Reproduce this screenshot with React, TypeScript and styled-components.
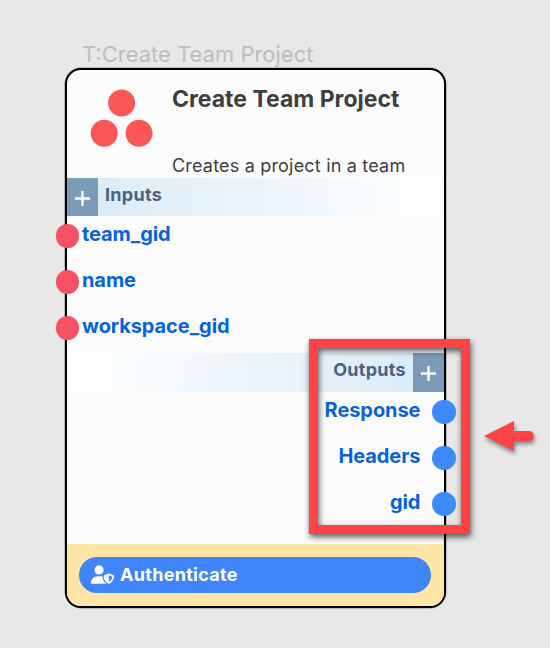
import React from "react";
import styled, { createGlobalStyle } from "styled-components";
import { FaUserShield } from "react-icons/fa6";

const GlobalStyle = createGlobalStyle`
  * { box-sizing: border-box; }
  body { margin: 0; background: #e8e8e8; font-family: Inter, sans-serif; }
`;

const Canvas = styled.main`
  position: relative;
  width: 550px;
  height: 648px;
  padding: 40px 0 0 65px;
  overflow: hidden;
  background: #e8e8e8;
`;

const NodeLabel = styled.div`
  height: 28px;
  padding-left: 17px;
  font-size: 22px;
  line-height: 29px;
  letter-spacing: 0;
  white-space: nowrap;
  color: #bdbdbd;
`;

const Card = styled.section`
  display: flex;
  flex-direction: column;
  width: 381px;
  height: 540px;
  border: 2px solid #000;
  border-radius: 16px;
  background: #fcfcfc;
  box-shadow: 0 0 0 0.5px rgba(0, 0, 0, 0.4);
`;

const Header = styled.header`
  display: flex;
  height: 108px;
  padding: 18px 0 0 23px;
`;

const Logo = styled.svg`
  flex: none;
  width: 64px;
  height: 60px;
  fill: #fc5656;
`;

const Heading = styled.div`
  display: flex;
  flex-direction: column;
  justify-content: space-between;
  margin: -3px 0 0 18px;
  white-space: nowrap;
  color: #3e3e40;
`;

const Title = styled.h1`
  margin: 0;
  font-size: 23px;
  line-height: 28px;
  font-weight: 700;
`;

const Description = styled.p`
  margin: 0;
  font-size: 18px;
  line-height: 24px;
  letter-spacing: 0.19px;
`;

const SectionBar = styled.div<{ $side: "left" | "right" }>`
  display: flex;
  flex-direction: ${(p) => (p.$side === "left" ? "row" : "row-reverse")};
  height: ${(p) => (p.$side === "left" ? 38 : 39)}px;
  background: linear-gradient(to ${(p) => (p.$side === "left" ? "right" : "left")}, #d8eaf7, #fff);
`;

const AddButton = styled.button`
  display: flex;
  justify-content: center;
  width: 31px;
  height: 100%;
  padding: 13px 0 0;
  border: 0;
  background: #7a9cb8;
`;

const SectionName = styled.span`
  padding: 5px 7px 0;
  font-size: 18px;
  line-height: 24px;
  font-weight: 700;
  letter-spacing: 0.3px;
  color: #4c627f;
`;

const PortList = styled.ul<{ $side: "left" | "right" }>`
  display: flex;
  flex-direction: column;
  gap: 8px;
  height: ${(p) => (p.$side === "left" ? 137 : 152)}px;
  margin: 0;
  padding: 0;
  list-style: none;
`;

const PortRow = styled.li<{ $side: "left" | "right" }>`
  position: relative;
  height: 38px;
  padding: ${(p) => (p.$side === "left" ? "0 0 0 15px" : "0 23.6px 0 0")};
  text-align: ${(p) => p.$side};
  font-size: 20px;
  line-height: 37px;
  font-weight: 700;
  letter-spacing: -0.08px;
  color: #0663d9;
`;

const PortDot = styled.i<{ $side: "left" | "right" }>`
  position: absolute;
  top: 8px;
  ${(p) => (p.$side === "left" ? "left: -11.2px" : "right: -11.5px")};
  width: 23.5px;
  height: 23.5px;
  border-radius: 50%;
  background: ${(p) => (p.$side === "left" ? "#f55164" : "#3d8bfb")};
`;

const Footer = styled.footer`
  flex: 1;
  padding: 12.5px 13px 0 12px;
  border-radius: 0 0 14px 14px;
  background: #ffe6a6;
`;

const AuthButton = styled.button`
  display: flex;
  align-items: center;
  gap: 6px;
  width: 100%;
  height: 36.5px;
  padding: 0 12px;
  border: 0;
  border-radius: 19px;
  background: #3f84f9;
  color: #fff;
  font: 700 18px/24px Inter, sans-serif;
  letter-spacing: 0.3px;
`;

const HighlightBox = styled.div`
  position: absolute;
  left: 309px;
  top: 339px;
  width: 161px;
  height: 195px;
  border: 9px solid #fd4344;
  filter: drop-shadow(1px 3px 3px rgba(0, 0, 0, 0.65));
`;

const Arrow = styled.svg`
  position: absolute;
  left: 480px;
  top: 416px;
  width: 60px;
  height: 44px;
  fill: #fd4344;
  filter: drop-shadow(1px 3px 2px rgba(0, 0, 0, 0.45));
`;

const Plus = () => (
  <svg width="15" height="15" viewBox="0 0 15 15" stroke="#fff" strokeWidth="2.4">
    <path d="M7.5 0V15M0 7.5H15" />
  </svg>
);

type Side = "left" | "right";

const Ports = ({ side, names }: { side: Side; names: string[] }) => (
  <PortList $side={side}>
    {names.map((name) => (
      <PortRow key={name} $side={side}>
        {name}
        <PortDot $side={side} />
      </PortRow>
    ))}
  </PortList>
);

const Section = ({ side, title }: { side: Side; title: string }) => (
  <SectionBar $side={side}>
    <AddButton aria-label={`Add to ${title}`}>
      <Plus />
    </AddButton>
    <SectionName>{title}</SectionName>
  </SectionBar>
);

export default function App() {
  return (
    <>
      <GlobalStyle />
      <Canvas>
        <NodeLabel>T:Create Team Project</NodeLabel>
        <Card>
          <Header>
            <Logo viewBox="0 0 64 60">
              <circle cx="31.6" cy="15" r="13.5" />
              <circle cx="14.2" cy="45.2" r="13.5" />
              <circle cx="49" cy="45.2" r="13.5" />
            </Logo>
            <Heading>
              <Title>Create Team Project</Title>
              <Description>Creates a project in a team</Description>
            </Heading>
          </Header>
          <Section side="left" title="Inputs" />
          <Ports side="left" names={["team_gid", "name", "workspace_gid"]} />
          <Section side="right" title="Outputs" />
          <Ports side="right" names={["Response", "Headers", "gid"]} />
          <Footer>
            <AuthButton>
              <FaUserShield size={23} />
              Authenticate
            </AuthButton>
          </Footer>
        </Card>
        <HighlightBox />
        <Arrow viewBox="0 0 60 44">
          <path d="M4 20L34 5V15H49a5 5 0 0 1 0 10H34V35Z" />
        </Arrow>
      </Canvas>
    </>
  );
}
